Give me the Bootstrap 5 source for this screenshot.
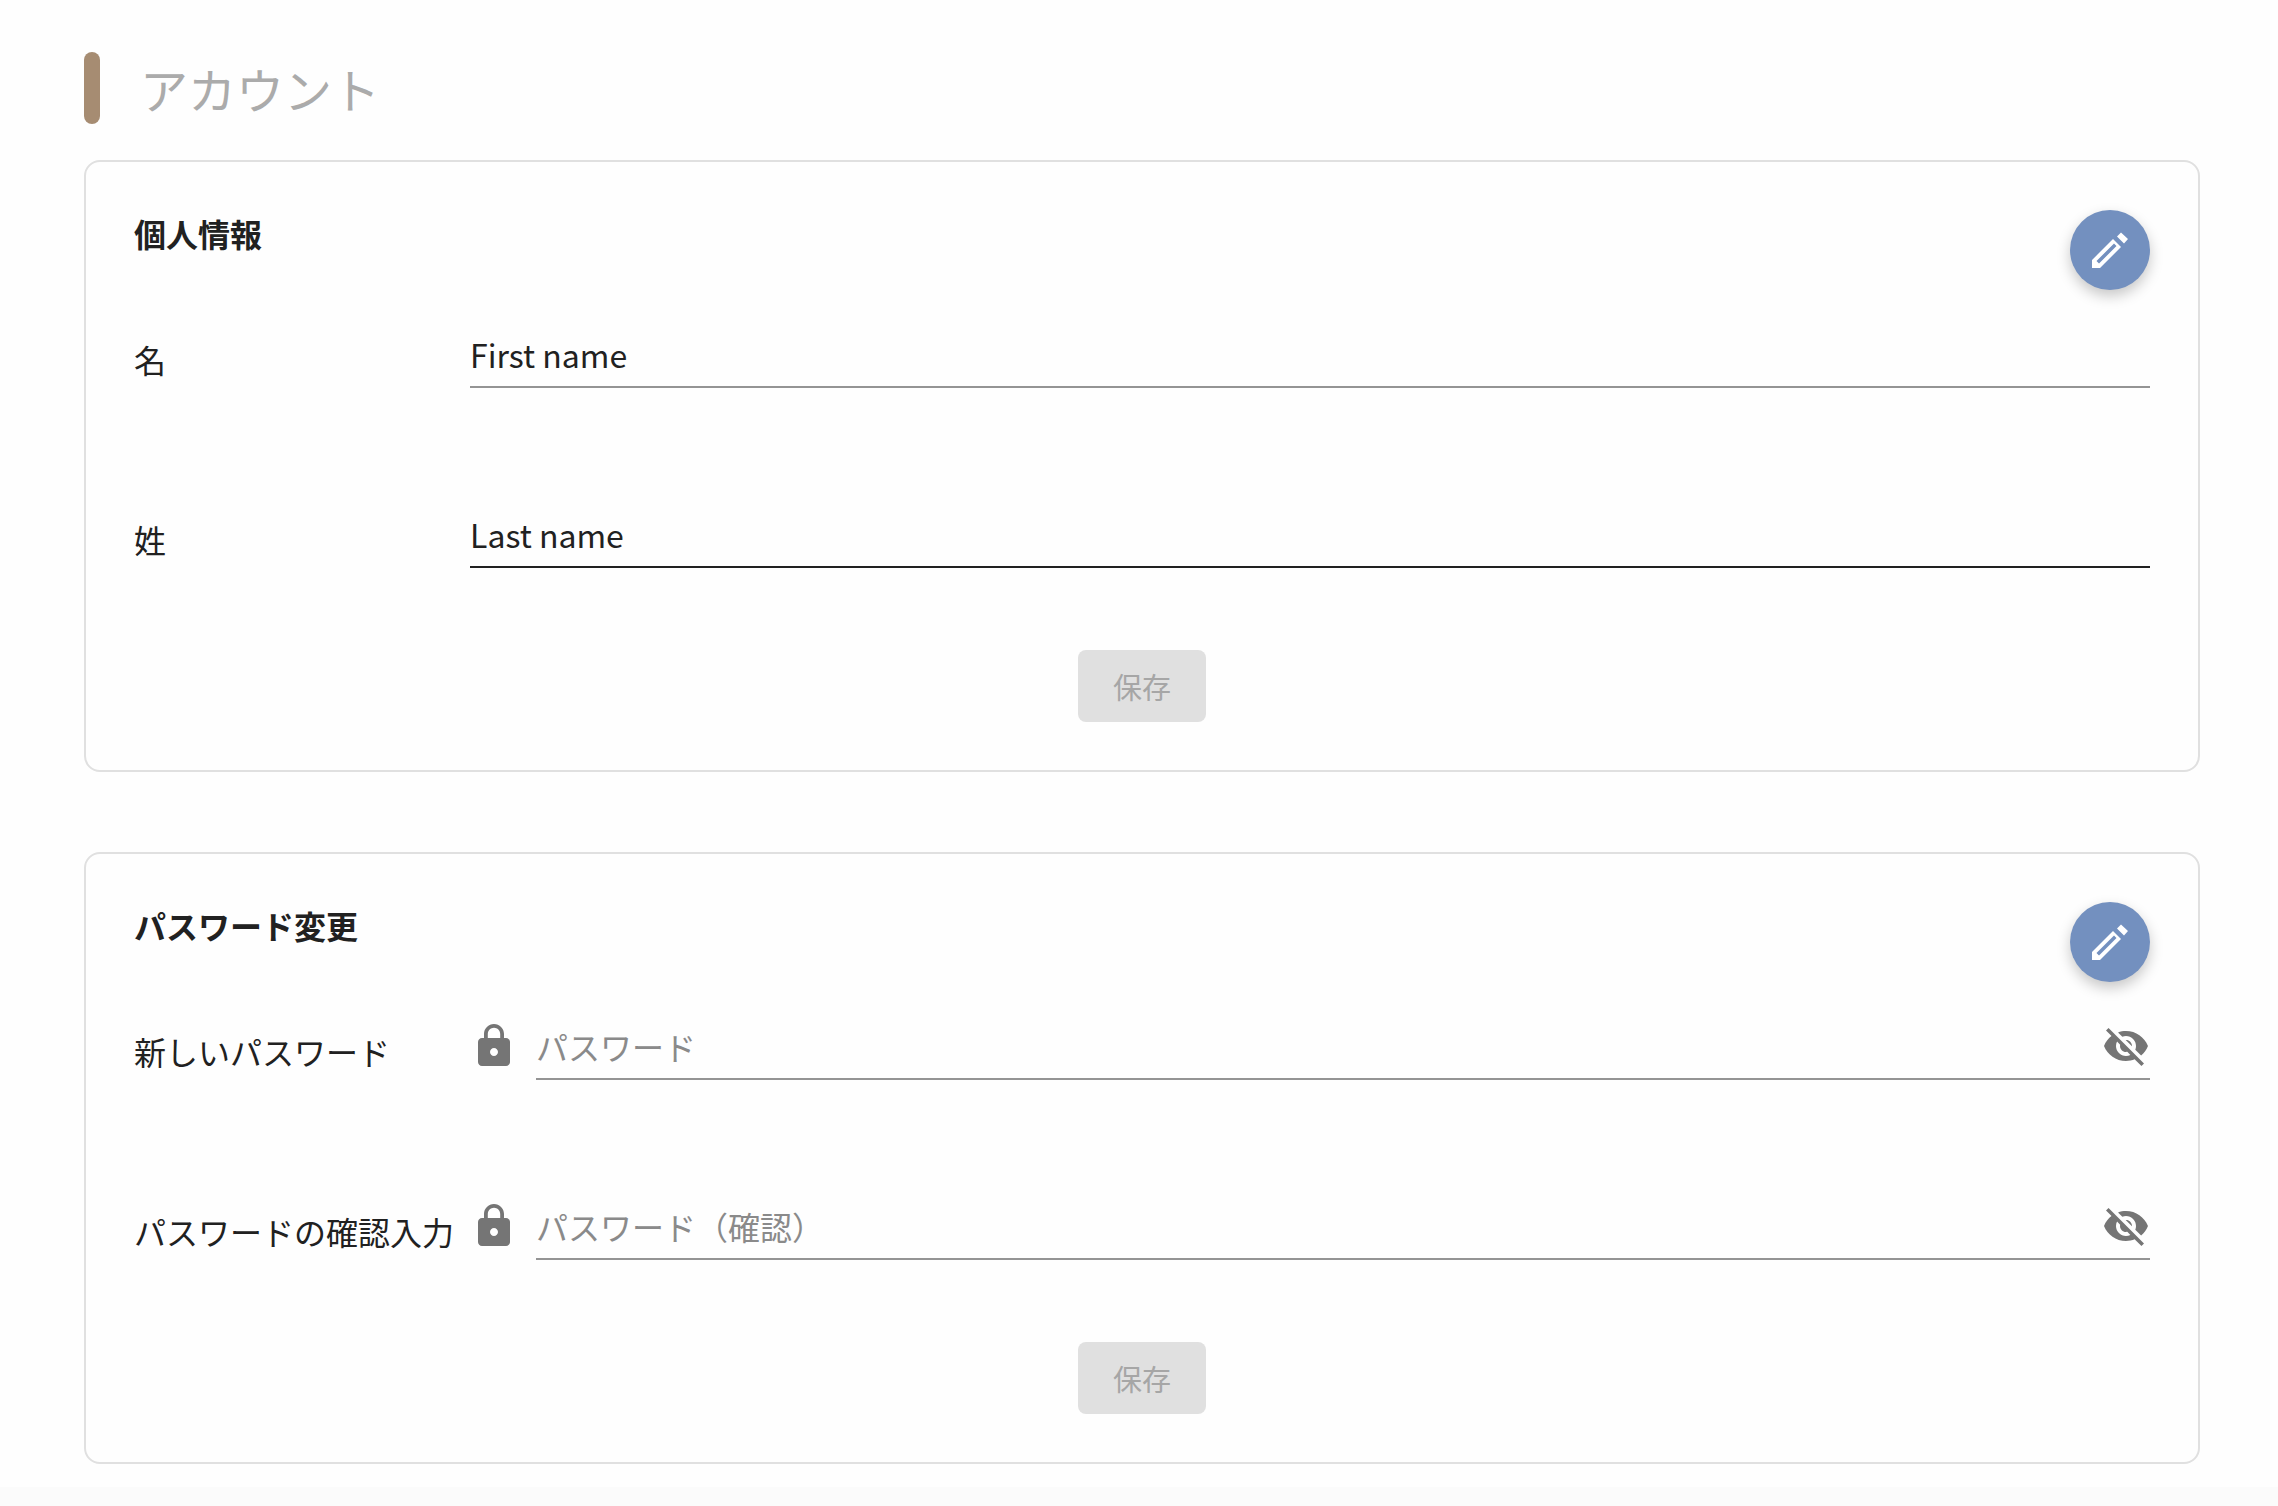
<!DOCTYPE html>
<html lang="ja">
<head>
<meta charset="utf-8">
<title>アカウント</title>
<link href="https://cdn.jsdelivr.net/npm/bootstrap@5.3.0/dist/css/bootstrap.min.css" rel="stylesheet">
<style>
html, body { height: 100%; }
body { background: #fefefe; color: #212121; font-family: "Noto Sans CJK JP", "Noto Sans", sans-serif; }
.page { min-height: 1506px; }
.page-main { padding: 52px 78px 0 84px; }
.page-foot { height: 19px; background: #fbfbfb; margin-top: auto; }
.head-bar { width: 16px; height: 72px; background: #a68c72; border-radius: 8px; }
.head-text { font-size: 48px; font-weight: 400; line-height: 72px; color: #ababab; margin: 0 0 0 40px; }
.head-row { margin-bottom: 36px; }
.panel { height: 612px; border: 2px solid #e0e0e0; border-radius: 16px; background: #fefefe; padding: 48px; }
.panel + .panel { margin-top: 80px; }
.panel-title { font-size: 32px; font-weight: 700; line-height: 46px; margin: 0; color: #212121; }
.fab { width: 80px; height: 80px; padding: 0; border: 0; border-radius: 50%; background: #7390bf; box-shadow: 0 6px 14px rgba(0,0,0,.22); }
.fab:hover { background: #7390bf; }
.panel-head { height: 80px; }
.field-row { height: 80px; margin-top: 18px; }
.field-row + .field-row { margin-top: 100px; }
.field-label { width: 336px; font-size: 32px; line-height: 48px; margin-bottom: 5px; color: #212121; white-space: nowrap; }
.lock-ico { width: 48px; height: 48px; margin-bottom: 10px; margin-right: 18px; fill: #757575; }
.eye-ico { width: 48px; height: 48px; fill: #757575; margin-bottom: 8px; flex: none; }
.field-box { border-bottom: 2px solid #949494; height: 80px; }
.field-box.is-dark { border-bottom-color: #212121; }
.field-input { border: 0; border-radius: 0; background: transparent; padding: 0; font-size: 32px; line-height: 48px; height: 48px; margin-bottom: 8px; color: #212121; box-shadow: none; }
.field-input:focus { box-shadow: none; background: transparent; }
.field-input::placeholder { color: #8a8a8a; opacity: 1; }
.save-btn { display: block; width: 128px; height: 72px; padding: 0; margin: 82px auto 0; font-size: 29px; line-height: 72px; border: 0; border-radius: 8px; }
.save-btn:disabled { background: #e0e0e0; color: #a6a6a6; opacity: 1; }
</style>
</head>
<body>
<div class="page d-flex flex-column">
  <main class="page-main">
    <div class="head-row d-flex align-items-center">
      <span class="head-bar"></span>
      <h1 class="head-text">アカウント</h1>
    </div>

    <section class="panel">
      <div class="panel-head d-flex justify-content-between align-items-start">
        <h2 class="panel-title">個人情報</h2>
        <button type="button" class="btn fab d-flex align-items-center justify-content-center" aria-label="編集">
          <svg width="36" height="36" viewBox="0 0 36 36" fill="#fff"><path d="M29 .5 36 7l-4 4.5L25 4.5zM21 7l8 8-21 21H0v-8zm1 4.5L4.5 29 7 31.5 24.5 14z" fill-rule="evenodd"/></svg>
        </button>
      </div>
      <div class="field-row d-flex align-items-end">
        <label class="field-label" for="fn">名</label>
        <div class="field-box flex-fill d-flex align-items-end"><input id="fn" class="form-control field-input" type="text" value="First name"></div>
      </div>
      <div class="field-row d-flex align-items-end">
        <label class="field-label" for="ln">姓</label>
        <div class="field-box is-dark flex-fill d-flex align-items-end"><input id="ln" class="form-control field-input" type="text" value="Last name"></div>
      </div>
      <button type="button" class="btn save-btn" disabled>保存</button>
    </section>

    <section class="panel">
      <div class="panel-head d-flex justify-content-between align-items-start">
        <h2 class="panel-title">パスワード変更</h2>
        <button type="button" class="btn fab d-flex align-items-center justify-content-center" aria-label="編集">
          <svg width="36" height="36" viewBox="0 0 36 36" fill="#fff"><path d="M29 .5 36 7l-4 4.5L25 4.5zM21 7l8 8-21 21H0v-8zm1 4.5L4.5 29 7 31.5 24.5 14z" fill-rule="evenodd"/></svg>
        </button>
      </div>
      <div class="field-row d-flex align-items-end">
        <label class="field-label" for="p1">新しいパスワード</label>
        <svg class="lock-ico" viewBox="0 0 24 24"><path d="M18 8h-1V6c0-2.76-2.24-5-5-5S7 3.24 7 6v2H6c-1.1 0-2 .9-2 2v10c0 1.1.9 2 2 2h12c1.1 0 2-.9 2-2V10c0-1.1-.9-2-2-2zm-6 9c-1.1 0-2-.9-2-2s.9-2 2-2 2 .9 2 2-.9 2-2 2zm3.1-9H8.9V6c0-1.71 1.39-3.1 3.1-3.1 1.71 0 3.1 1.39 3.1 3.1v2z"/></svg>
        <div class="field-box flex-fill d-flex align-items-end">
          <input id="p1" class="form-control field-input" type="password" placeholder="パスワード">
          <svg class="eye-ico" viewBox="0 0 24 24"><path d="M12 7c2.76 0 5 2.24 5 5 0 .65-.13 1.26-.36 1.83l2.92 2.92c1.51-1.26 2.7-2.89 3.43-4.75-1.73-4.39-6-7.5-11-7.5-1.4 0-2.74.25-3.98.7l2.16 2.16C10.74 7.13 11.35 7 12 7zM2 4.27l2.28 2.28.46.46C3.08 8.3 1.78 10.02 1 12c1.73 4.39 6 7.5 11 7.5 1.55 0 3.03-.3 4.38-.84l.42.42L19.73 22 21 20.73 3.27 3 2 4.27zM7.53 9.8l1.55 1.55c-.05.21-.08.43-.08.65 0 1.66 1.34 3 3 3 .22 0 .44-.03.65-.08l1.55 1.55c-.67.33-1.41.53-2.2.53-2.76 0-5-2.24-5-5 0-.79.2-1.53.53-2.2zm4.31-.78l3.15 3.15.02-.16c0-1.66-1.34-3-3-3l-.17.01z"/></svg>
        </div>
      </div>
      <div class="field-row d-flex align-items-end">
        <label class="field-label" for="p2">パスワードの確認入力</label>
        <svg class="lock-ico" viewBox="0 0 24 24"><path d="M18 8h-1V6c0-2.76-2.24-5-5-5S7 3.24 7 6v2H6c-1.1 0-2 .9-2 2v10c0 1.1.9 2 2 2h12c1.1 0 2-.9 2-2V10c0-1.1-.9-2-2-2zm-6 9c-1.1 0-2-.9-2-2s.9-2 2-2 2 .9 2 2-.9 2-2 2zm3.1-9H8.9V6c0-1.71 1.39-3.1 3.1-3.1 1.71 0 3.1 1.39 3.1 3.1v2z"/></svg>
        <div class="field-box flex-fill d-flex align-items-end">
          <input id="p2" class="form-control field-input" type="password" placeholder="パスワード（確認）">
          <svg class="eye-ico" viewBox="0 0 24 24"><path d="M12 7c2.76 0 5 2.24 5 5 0 .65-.13 1.26-.36 1.83l2.92 2.92c1.51-1.26 2.7-2.89 3.43-4.75-1.73-4.39-6-7.5-11-7.5-1.4 0-2.74.25-3.98.7l2.16 2.16C10.74 7.13 11.35 7 12 7zM2 4.27l2.28 2.28.46.46C3.08 8.3 1.78 10.02 1 12c1.73 4.39 6 7.5 11 7.5 1.55 0 3.03-.3 4.38-.84l.42.42L19.73 22 21 20.73 3.27 3 2 4.27zM7.53 9.8l1.55 1.55c-.05.21-.08.43-.08.65 0 1.66 1.34 3 3 3 .22 0 .44-.03.65-.08l1.55 1.55c-.67.33-1.41.53-2.2.53-2.76 0-5-2.24-5-5 0-.79.2-1.53.53-2.2zm4.31-.78l3.15 3.15.02-.16c0-1.66-1.34-3-3-3l-.17.01z"/></svg>
        </div>
      </div>
      <button type="button" class="btn save-btn" disabled>保存</button>
    </section>
  </main>
  <div class="page-foot"></div>
</div>
<script src="https://cdn.jsdelivr.net/npm/bootstrap@5.3.0/dist/js/bootstrap.bundle.min.js"></script>
</body>
</html>
